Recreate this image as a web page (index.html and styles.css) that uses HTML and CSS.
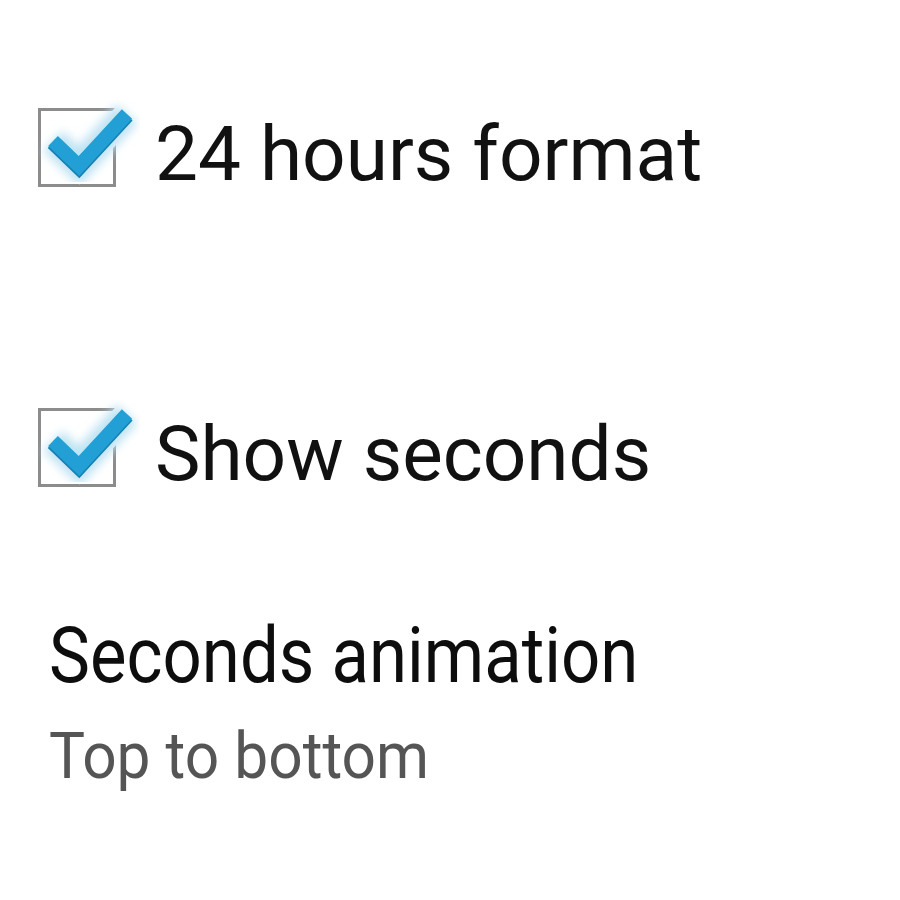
FILE: index.html
```html
<!DOCTYPE html>
<html>
<head>
<meta charset="utf-8">
<link rel="stylesheet" href="styles.css">
</head>
<body>
<div class="list">
  <div class="row row-first">
    <svg class="check" viewBox="0 0 110 100" width="110" height="100">
      <defs>
        <filter id="glow" x="-30%" y="-30%" width="160%" height="160%">
          <feGaussianBlur stdDeviation="5"/>
        </filter>
      </defs>
      <rect x="9.5" y="9.5" width="75" height="76" fill="none" stroke="#8c8c8c" stroke-width="3"/>
      <path d="M23 41 L49 66 L97 14" fill="none" stroke="#ffffff" stroke-width="26" stroke-linejoin="miter"/>
      <path d="M23 41 L49 66 L97 14" fill="none" stroke="#bfe3f3" stroke-width="28" filter="url(#glow)"/>
      <path d="M23 41 L49 66 L97 14" fill="none" stroke="#157fb0" stroke-width="15" transform="translate(0 1.5)"/>
      <path d="M23 41 L49 66 L97 14" fill="none" stroke="#22a0d6" stroke-width="14"/>
    </svg>
    <span class="label">24 hours format</span>
  </div>
  <div class="row row-second">
    <svg class="check" viewBox="0 0 110 100" width="110" height="100">
      <defs>
        <filter id="glow2" x="-30%" y="-30%" width="160%" height="160%">
          <feGaussianBlur stdDeviation="5"/>
        </filter>
      </defs>
      <rect x="9.5" y="9.5" width="75" height="76" fill="none" stroke="#8c8c8c" stroke-width="3"/>
      <path d="M23 41 L49 66 L97 14" fill="none" stroke="#ffffff" stroke-width="26" stroke-linejoin="miter"/>
      <path d="M23 41 L49 66 L97 14" fill="none" stroke="#bfe3f3" stroke-width="28" filter="url(#glow2)"/>
      <path d="M23 41 L49 66 L97 14" fill="none" stroke="#157fb0" stroke-width="15" transform="translate(0 1.5)"/>
      <path d="M23 41 L49 66 L97 14" fill="none" stroke="#22a0d6" stroke-width="14"/>
    </svg>
    <span class="label">Show seconds</span>
  </div>
  <div class="pref">
    <div class="pref-title">Seconds animation</div>
    <div class="pref-summary">Top to bottom</div>
  </div>
</div>
</body>
</html>
```
FILE: styles.css
```css
html, body {
  margin: 0;
  padding: 0;
  background: #ffffff;
}

body {
  font-family: Roboto, "Liberation Sans", sans-serif;
  color: #111111;
}

.list {
  padding-top: 100px;
}

.row {
  display: flex;
  align-items: flex-start;
  height: 100px;
  padding-left: 30px;
}

.row-second {
  margin-top: 200px;
}

.check {
  display: block;
  flex: 0 0 auto;
}

.label {
  margin-left: 15px;
  margin-top: 9px;
  font-size: 76.5px;
  line-height: 90px;
  white-space: nowrap;
}

.pref {
  margin-top: 111px;
  padding-left: 49px;
}

.pref-title {
  font-size: 77px;
  line-height: 90px;
  color: #0d0d0d;
  white-space: nowrap;
  transform: scaleX(0.895);
  transform-origin: left center;
}

.pref-summary {
  margin-top: 17px;
  font-size: 65px;
  line-height: 76px;
  color: #555555;
  white-space: nowrap;
  transform: scaleX(0.93);
  transform-origin: left center;
}
```
